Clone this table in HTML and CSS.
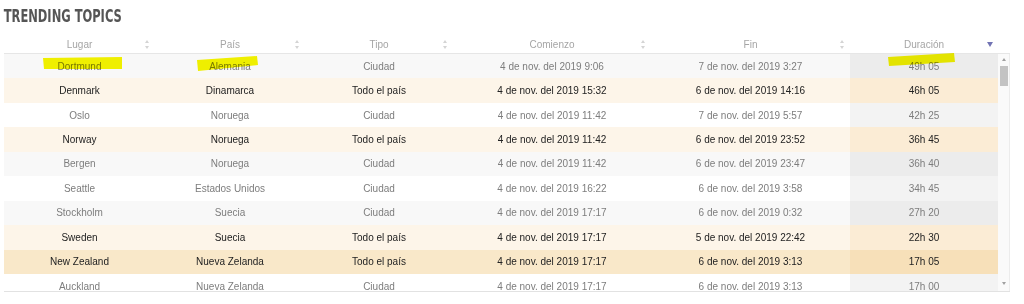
FILE: index.html
```html
<!DOCTYPE html>
<html>
<head>
    <meta charset="UTF-8">
    <title>Trending topics</title>
    <link rel="stylesheet" href="styles.css">
</head>
<body>
<div class="page">
    <h2 class="title">TRENDING TOPICS</h2>

    <div class="table">
        <div class="head">
            <div class="th"><span class="label">Lugar</span><span class="sort"></span></div>
            <div class="th"><span class="label">País</span><span class="sort"></span></div>
            <div class="th"><span class="label">Tipo</span><span class="sort"></span></div>
            <div class="th"><span class="label">Comienzo</span><span class="sort"></span></div>
            <div class="th"><span class="label">Fin</span><span class="sort"></span></div>
            <div class="th"><span class="label">Duración</span><span class="sort desc"></span></div>
            <div class="th-gap"></div>
        </div>

        <div class="body">
            <div class="rows">
                <div class="row grey">
                    <div class="td">Dortmund</div><div class="td">Alemania</div><div class="td">Ciudad</div>
                    <div class="td">4 de nov. del 2019 9:06</div><div class="td">7 de nov. del 2019 3:27</div><div class="td sorted">49h 05</div>
                </div>
                <div class="row country">
                    <div class="td">Denmark</div><div class="td">Dinamarca</div><div class="td">Todo el país</div>
                    <div class="td">4 de nov. del 2019 15:32</div><div class="td">6 de nov. del 2019 14:16</div><div class="td sorted">46h 05</div>
                </div>
                <div class="row">
                    <div class="td">Oslo</div><div class="td">Noruega</div><div class="td">Ciudad</div>
                    <div class="td">4 de nov. del 2019 11:42</div><div class="td">7 de nov. del 2019 5:57</div><div class="td sorted">42h 25</div>
                </div>
                <div class="row country">
                    <div class="td">Norway</div><div class="td">Noruega</div><div class="td">Todo el país</div>
                    <div class="td">4 de nov. del 2019 11:42</div><div class="td">6 de nov. del 2019 23:52</div><div class="td sorted">36h 45</div>
                </div>
                <div class="row grey">
                    <div class="td">Bergen</div><div class="td">Noruega</div><div class="td">Ciudad</div>
                    <div class="td">4 de nov. del 2019 11:42</div><div class="td">6 de nov. del 2019 23:47</div><div class="td sorted">36h 40</div>
                </div>
                <div class="row">
                    <div class="td">Seattle</div><div class="td">Estados Unidos</div><div class="td">Ciudad</div>
                    <div class="td">4 de nov. del 2019 16:22</div><div class="td">6 de nov. del 2019 3:58</div><div class="td sorted">34h 45</div>
                </div>
                <div class="row grey">
                    <div class="td">Stockholm</div><div class="td">Suecia</div><div class="td">Ciudad</div>
                    <div class="td">4 de nov. del 2019 17:17</div><div class="td">6 de nov. del 2019 0:32</div><div class="td sorted">27h 20</div>
                </div>
                <div class="row country">
                    <div class="td">Sweden</div><div class="td">Suecia</div><div class="td">Todo el país</div>
                    <div class="td">4 de nov. del 2019 17:17</div><div class="td">5 de nov. del 2019 22:42</div><div class="td sorted">22h 30</div>
                </div>
                <div class="row country strong">
                    <div class="td">New Zealand</div><div class="td">Nueva Zelanda</div><div class="td">Todo el país</div>
                    <div class="td">4 de nov. del 2019 17:17</div><div class="td">6 de nov. del 2019 3:13</div><div class="td sorted">17h 05</div>
                </div>
                <div class="row">
                    <div class="td">Auckland</div><div class="td">Nueva Zelanda</div><div class="td">Ciudad</div>
                    <div class="td">4 de nov. del 2019 17:17</div><div class="td">6 de nov. del 2019 3:13</div><div class="td sorted">17h 00</div>
                </div>
            </div>

            <!-- barra de desplazamiento -->
            <div class="scrollbar">
                <span class="arrow up"></span>
                <span class="thumb"></span>
                <span class="track"></span>
                <span class="arrow down"></span>
            </div>
        </div>
    </div>

    <!-- marcas de rotulador -->
    <svg class="marks" width="1024" height="304" viewBox="0 0 1024 304">
        <polygon points="43,58 122,57 122,69 44,69" />
        <polygon points="197,60 257,56 258,65 198,71" />
        <polygon points="888,57 954,53 955,62 889,66" />
    </svg>
</div>
</body>
</html>
```

FILE: styles.css
```css
body {
    margin: 0;
    padding: 0;
    background-color: #fff;
    font-family: 'Liberation Sans', Arial, sans-serif;
}

.page {
    position: relative;
    width: 1024px;
    height: 304px;
    overflow: hidden;
}

.title {
    margin: 0;
    padding: 6px 0 0 5px;
    height: 20px;
    line-height: 20px;
    font-family: 'DejaVu Sans Condensed', 'Liberation Sans Narrow', sans-serif;
    font-size: 17px;
    font-weight: bold;
    color: #555;
    transform: scaleX(0.75);
    transform-origin: left center;
    white-space: nowrap;
}

.table {
    margin: 9px 0 0 4px;
    width: 1006px;
}

.head {
    display: grid;
    grid-template-columns: 151px 150px 148px 198px 199px 148px 12px;
    height: 18px;
    border-bottom: 1px solid #e6e6e6;
}

.th {
    display: flex;
    align-items: center;
    padding-left: 11px;
    font-size: 10px;
    color: #a5a5a5;
}

.th .label {
    flex: 1;
    text-align: center;
}

.sort {
    width: 6px;
    height: 9px;
    margin-right: 5px;
    display: flex;
    flex-direction: column;
    justify-content: space-between;
    align-items: center;
}

.sort::before,
.sort::after {
    content: "";
    width: 0;
    height: 0;
    border-left: 2.5px solid transparent;
    border-right: 2.5px solid transparent;
}

.sort::before {
    border-bottom: 3.5px solid #d4d4d4;
}

.sort::after {
    border-top: 3.5px solid #d4d4d4;
}

.sort.desc {
    justify-content: center;
}

.sort.desc::before {
    display: none;
}

.sort.desc::after {
    border-left-width: 3px;
    border-right-width: 3px;
    border-top: 5px solid #7274b4;
}

.body {
    display: flex;
    height: 237px;
    overflow: hidden;
    border-bottom: 1px solid #e2e2e2;
}

.rows {
    width: 994px;
}

.row {
    display: grid;
    grid-template-columns: 151px 150px 148px 198px 199px 148px;
    height: 24.45px;
    background-color: #fff;
    color: #7d7d7d;
    font-size: 10px;
}

.td {
    display: flex;
    align-items: center;
    justify-content: center;
    white-space: nowrap;
}

.td.sorted {
    background-color: #f3f3f3;
}

.row.grey {
    background-color: #f8f8f8;
}

.row.grey .sorted {
    background-color: #ececec;
}

.row.country {
    background-color: #fdf5e9;
    color: #222;
}

.row.country .sorted {
    background-color: #fbecd5;
}

.row.strong {
    background-color: #f9e8c9;
}

.row.strong .sorted {
    background-color: #f7e0b9;
}

.scrollbar {
    width: 12px;
    display: flex;
    flex-direction: column;
    align-items: center;
    background-color: #fafafa;
    border-right: 1px solid #ececec;
    box-sizing: border-box;
}

.arrow {
    width: 0;
    height: 0;
    border-left: 2.5px solid transparent;
    border-right: 2.5px solid transparent;
}

.arrow.up {
    margin-top: 4px;
    border-bottom: 3px solid #a0a0a0;
}

.arrow.down {
    margin-bottom: 6px;
    border-top: 3px solid #a0a0a0;
}

.thumb {
    margin-top: 5px;
    width: 8px;
    height: 20px;
    background-color: #c3c3c3;
}

.track {
    flex: 1;
}

.marks {
    position: absolute;
    left: 0;
    top: 0;
    pointer-events: none;
    mix-blend-mode: multiply;
}

.marks polygon {
    fill: #f6f600;
}
```
